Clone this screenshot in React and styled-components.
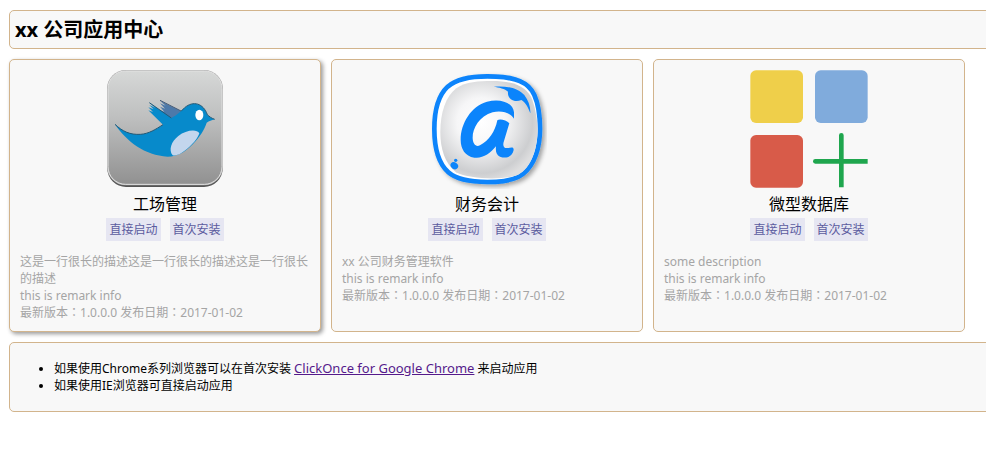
import React from "react";
import styled, { createGlobalStyle, css } from "styled-components";

const GlobalStyle = createGlobalStyle`
  * {
    box-sizing: border-box;
  }

  body {
    margin: 0;
    background: #fff;
    color: #000;
    font-family: "Noto Sans", "Noto Sans CJK SC", sans-serif;
    font-size: 12px;
    line-height: 17px;
  }
`;

const Page = styled.div`
  display: flex;
  flex-direction: column;
  gap: 10px;
  padding: 10px 0 10px 9px;
  overflow-x: hidden;
`;

const surface = css`
  border: 1px solid #d2b48c;
  border-radius: 5px;
  background: #f8f8f8;
`;

/* Panels run past the right edge of the window. */
const Header = styled.header`
  ${surface}
  margin-right: -12px;
  padding: 5px;
`;

const Heading = styled.h1`
  margin: 0;
  font-size: 20px;
  line-height: 27px;
  font-weight: 700;
`;

const AppList = styled.main`
  display: flex;
  flex-wrap: wrap;
  gap: 10px;
`;

const Card = styled.article`
  ${surface}
  display: flex;
  flex-direction: column;
  align-items: center;
  width: 312px;
  padding: 9px 10px 10px;
  box-shadow: ${({ $raised }) => ($raised ? "2px 2px 4px rgba(0, 0, 0, 0.4)" : "none")};
`;

const AppIcon = styled.svg`
  display: block;
  width: 120px;
  height: 120px;
`;

const AppName = styled.h2`
  margin: 4px 0 3px;
  font-size: 16px;
  line-height: 22px;
  font-weight: 400;
`;

const Actions = styled.div`
  display: flex;
  gap: 9px;
`;

const ActionLink = styled.a`
  padding: 3px;
  background: #e6e6f2;
  color: #5b5b9f;
  text-decoration: none;
`;

const Details = styled.div`
  align-self: stretch;
  margin: 12px 0 0;
  color: #a5a5a5;
`;

const Line = styled.p`
  margin: 0;
`;

/* The TC face centres the full-width colon in its cell. */
const Colon = styled.span`
  font-family: "Noto Sans CJK TC", sans-serif;
  line-height: 1;
`;

const Footer = styled.footer`
  ${surface}
  margin-right: -12px;
  padding: 17px 5px;
`;

const Notes = styled.ul`
  margin: 0;
  padding-left: 39px;
`;

const NoteLink = styled.a`
  color: #551a8b;
  font-size: 13px;
`;

function BirdIcon() {
  return (
    <AppIcon viewBox="30 27 360 360" aria-hidden="true">
      <defs>
        <linearGradient id="birdTile" x1="0" y1="0" x2="0" y2="1">
          <stop offset="0" stopColor="#d6d8d7" />
          <stop offset="0.4" stopColor="#bfc0c0" />
          <stop offset="1" stopColor="#919191" />
        </linearGradient>
      </defs>
      <rect x="37" y="35" width="346" height="346" rx="56" fill="#555" />
      <rect x="36" y="30" width="348" height="346" rx="56" fill="#aaa" />
      <rect x="39" y="33" width="342" height="340" rx="53" fill="url(#birdTile)" stroke="#e1e1e1" strokeWidth="3" />
      <path d="M204 160 L194 150 L208 155 L195 140 L210 146 L195 130 L212 137 L195 122 L258 154 L242 178 L225 174Z" fill="#4d79a9" />
      <path d="M195 121 L258 153" stroke="#405674" strokeWidth="3" fill="none" />
      <path
        d="M60 193 C82 214 105 225 137 223 C162 221 182 208 204 194 L160 151 L174 156 L160 142 L176 148 L163 135 L180 143 L163 128 L229 174 C247 164 255 155 269 143 C295 121 325 130 337 164 C343 170 350 175 359 178 C350 181 342 183 335 188 C328 210 313 232 294 252 C269 277 247 290 218 290 C150 287 94 244 60 193Z"
        fill="#078acb"
      />
      <path d="M60 193 C82 214 105 225 137 223 C162 221 182 208 204 194 M163 128 L229 174 M258 154 L269 143 C295 121 325 130 337 164 C343 170 350 175 359 178" fill="none" stroke="#235976" strokeWidth="3" />
      <path d="M233 286 C220 270 229 244 250 228 C272 211 305 206 313 220 C307 239 282 266 258 280 C249 285 240 288 233 286Z" fill="#c3d6ed" />
      <ellipse cx="313" cy="165" rx="12" ry="16" fill="#fff" />
    </AppIcon>
  );
}

function LetterIcon() {
  return (
    <AppIcon viewBox="21 27 360 360" aria-hidden="true">
      <defs>
        <radialGradient id="letterFace" cx="0.42" cy="0.42" r="0.62">
          <stop offset="0" stopColor="#fff" />
          <stop offset="0.4" stopColor="#f6f6f7" />
          <stop offset="0.85" stopColor="#cdced0" />
          <stop offset="1" stopColor="#dededf" />
        </radialGradient>
        <filter id="letterShadow" x="-20%" y="-20%" width="150%" height="150%">
          <feDropShadow dx="8" dy="7" stdDeviation="7" floodColor="#000" floodOpacity="0.35" />
        </filter>
      </defs>
      <path
        d="M202 49 C290 49 327 68 343 105 C356 134 360 176 360 207 C360 264 343 315 309 342 C284 362 246 366 202 366 C151 366 111 360 85 337 C54 309 43 263 43 207 C43 158 54 107 83 80 C110 56 153 49 202 49Z"
        fill="#fff"
        stroke="#0b84fb"
        strokeWidth="14"
        filter="url(#letterShadow)"
      />
      <path
        d="M216 63 C286 63 322 82 337 119 C348 150 353 185 353 215 C350 275 332 321 297 343 C262 361 149 359 108 337 C74 310 61 265 61 216 C61 159 77 109 109 85 C138 65 177 63 216 63Z"
        fill="url(#letterFace)"
      />
      <path
        d="M282 176 C273 159 245 150 218 157 C177 168 157 207 158 235 C159 253 168 262 180 256 C207 242 225 215 232 181 C239 175 260 181 268 190 L252 243 C247 257 251 266 264 264 C273 263 281 259 281 270 C277 290 260 297 240 290 C230 285 226 276 228 259 C211 280 187 297 163 293 C135 288 122 267 122 239 C122 190 153 139 201 125 C242 114 279 128 282 157Z"
        fill="#0b84fb"
      />
      <path d="M221 80 C254 77 291 81 313 105 C325 121 332 140 331 160 C324 141 317 128 304 120 C284 129 261 118 264 95 C255 86 237 82 221 80Z" fill="#0b84fb" />
      <ellipse cx="103" cy="317" rx="12" ry="10" transform="rotate(35 103 317)" fill="#0b84fb" />
      <circle cx="107" cy="301" r="5" fill="#0b84fb" />
    </AppIcon>
  );
}

function BlocksIcon() {
  return (
    <AppIcon viewBox="27 27 360 360" aria-hidden="true">
      <rect x="31" y="31" width="158" height="158" rx="17" fill="#efcf4a" />
      <rect x="225" y="31" width="158" height="158" rx="17" fill="#80abdc" />
      <rect x="31" y="225" width="158" height="158" rx="17" fill="#d85b49" />
      <path d="M297 382 V226 Q297 219 304 219 Q311 219 311 226 V297 H383 V311 H311 V382Z" fill="#1fa64e" />
      <path d="M297 297 H226 Q219 297 219 304 Q219 311 226 311 H297Z" fill="#1fa64e" />
    </AppIcon>
  );
}

const apps = [
  {
    name: "工场管理",
    Icon: BirdIcon,
    description: "这是一行很长的描述这是一行很长的描述这是一行很长的描述",
    raised: true,
  },
  { name: "财务会计", Icon: LetterIcon, description: "xx 公司财务管理软件" },
  { name: "微型数据库", Icon: BlocksIcon, description: "some description" },
];

function AppCard({ name, Icon, description, raised }) {
  return (
    <Card $raised={raised}>
      <Icon />
      <AppName>{name}</AppName>
      <Actions>
        <ActionLink href="#launch">直接启动</ActionLink>
        <ActionLink href="#install">首次安装</ActionLink>
      </Actions>
      <Details>
        <Line>{description}</Line>
        <Line>this is remark info</Line>
        <Line>
          最新版本<Colon lang="zh-TW">：</Colon>1.0.0.0 发布日期<Colon lang="zh-TW">：</Colon>2017-01-02
        </Line>
      </Details>
    </Card>
  );
}

export default function App() {
  return (
    <>
      <GlobalStyle />
      <Page lang="zh-CN">
        <Header>
          <Heading>xx 公司应用中心</Heading>
        </Header>
        <AppList>
          {apps.map((app) => (
            <AppCard key={app.name} {...app} />
          ))}
        </AppList>
        <Footer>
          <Notes>
            <li>
              如果使用Chrome系列浏览器可以在首次安装{" "}
              <NoteLink href="#clickonce">ClickOnce for Google Chrome</NoteLink> 来启动应用
            </li>
            <li>如果使用IE浏览器可直接启动应用</li>
          </Notes>
        </Footer>
      </Page>
    </>
  );
}
